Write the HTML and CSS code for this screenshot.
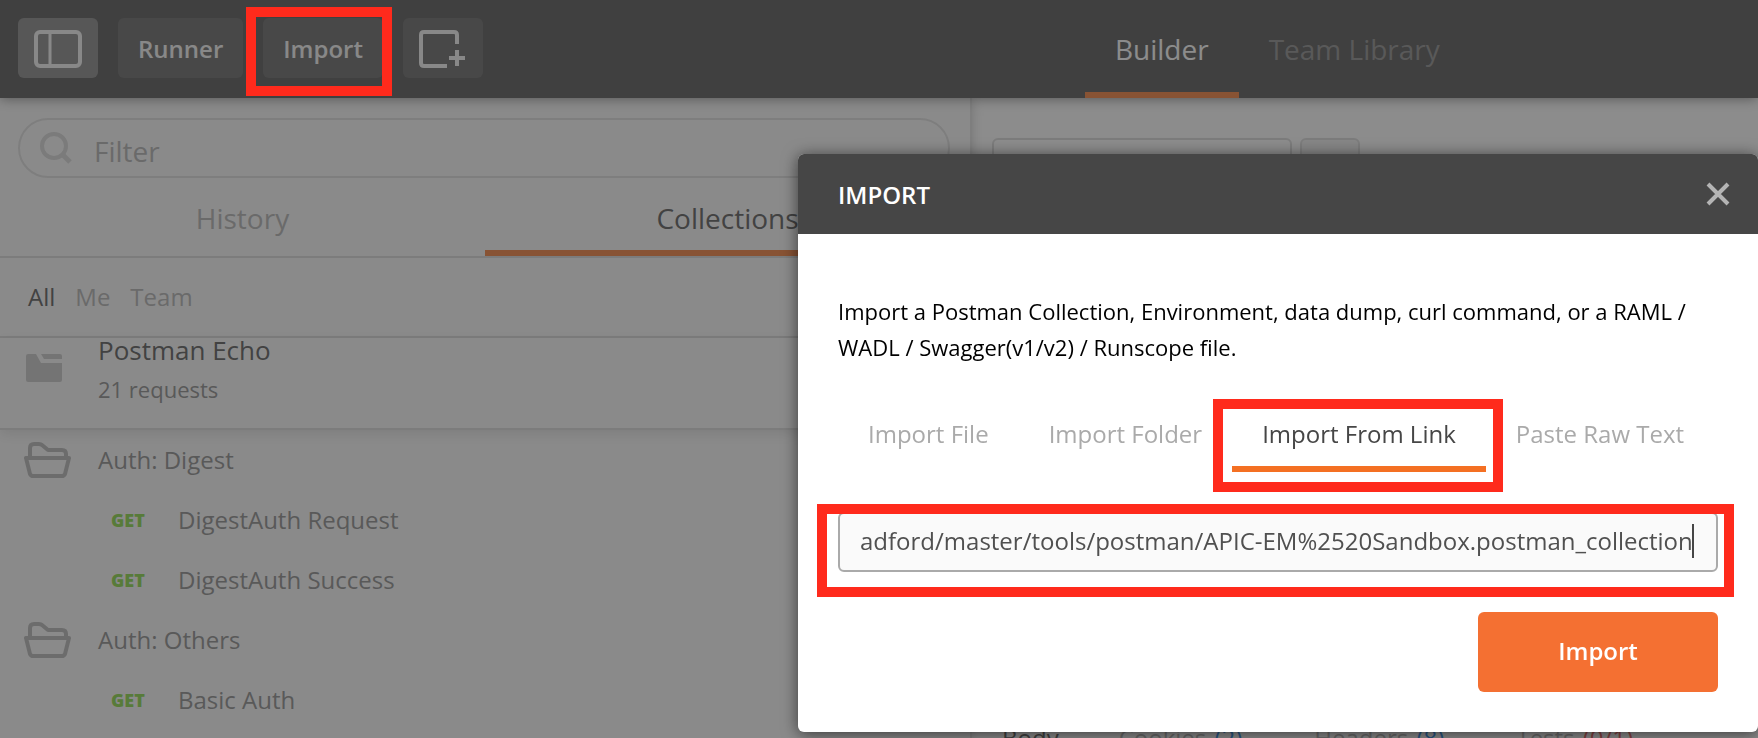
FILE: index.html
```html
<!DOCTYPE html>
<html lang="en">

<head>
  <meta charset="UTF-8">
  <meta name="viewport" content="width=device-width, initial-scale=1.0">
  <title>Postman</title>

  <link rel="stylesheet" href="styles.css">
</head>

<body>
  <div class="app">
    <header class="topbar">
      <button class="tool tool_active" type="button" aria-label="Toggle sidebar">
        <svg width="48" height="38" viewBox="0 0 48 38" fill="none" stroke="currentColor">
          <rect x="2" y="2" width="44" height="34" rx="4" stroke-width="4" />
          <path d="M16 4V34" stroke-width="3" />
        </svg>
      </button>
      <button class="tool" type="button">Runner</button>
      <button class="tool" type="button">Import</button>
      <button class="tool" type="button" aria-label="New window">
        <svg width="48" height="38" viewBox="0 0 48 38" fill="none" stroke="currentColor" stroke-width="4">
          <path d="M28 36H5Q2 36 2 33V5Q2 2 5 2H35Q38 2 38 5V14" />
          <path d="M38 20V36M30 28H46" />
        </svg>
      </button>
      <nav class="views">
        <a class="view view_active" href="#">Builder</a>
        <a class="view" href="#">Team Library</a>
      </nav>
    </header>

    <div class="workspace">
      <aside class="sidebar">
        <label class="filter">
          <svg width="34" height="34" viewBox="0 0 34 34" fill="none" stroke="currentColor">
            <circle cx="14" cy="15" r="12" stroke-width="4" />
            <path d="M22 23L30 31" stroke-width="5" />
          </svg>
          <input type="text" placeholder="Filter" aria-label="Filter">
        </label>
        <nav class="side_tabs">
          <a class="side_tab" href="#">History</a>
          <a class="side_tab side_tab_active" href="#">Collections</a>
        </nav>
        <nav class="scopes">
          <a class="scope scope_active" href="#">All</a>
          <a class="scope" href="#">Me</a>
          <a class="scope" href="#">Team</a>
        </nav>
        <div class="collection">
          <svg width="36" height="28" viewBox="0 0 36 28" fill="currentColor">
            <path d="M0 2Q0 0 2 0H10L15 9H36V26Q36 28 34 28H2Q0 28 0 26Z" />
            <path d="M15 0H34Q36 0 36 2V5H18Z" />
          </svg>
          <div>
            <div class="collection_name">Postman Echo</div>
            <div class="collection_count">21 requests</div>
          </div>
        </div>
        <ul class="tree">
          <li class="folder">
            <svg width="48" height="36" viewBox="0 0 48 36" fill="none" stroke="currentColor" stroke-width="4" stroke-linejoin="round">
              <path d="M6 16V6Q6 2 10 2H15Q17 2 18 3L24 8H38Q42 8 42 12V16" />
              <path d="M2 16H45L41 32Q40 34 38 34H9Q7 34 6 32Z" />
            </svg>
            <span>Auth: Digest</span>
          </li>
          <li class="request"><span class="method">GET</span><span>DigestAuth Request</span></li>
          <li class="request"><span class="method">GET</span><span>DigestAuth Success</span></li>
          <li class="folder">
            <svg width="48" height="36" viewBox="0 0 48 36" fill="none" stroke="currentColor" stroke-width="4" stroke-linejoin="round">
              <path d="M6 16V6Q6 2 10 2H15Q17 2 18 3L24 8H38Q42 8 42 12V16" />
              <path d="M2 16H45L41 32Q40 34 38 34H9Q7 34 6 32Z" />
            </svg>
            <span>Auth: Others</span>
          </li>
          <li class="request"><span class="method">GET</span><span>Basic Auth</span></li>
        </ul>
      </aside>

      <main class="builder">
        <div class="request_tabs">
          <button class="request_tab" type="button" aria-label="Open request"></button>
          <button class="request_add" type="button" aria-label="New request"></button>
        </div>
        <nav class="response_tabs">
          <a class="response_tab response_tab_active" href="#">Body</a>
          <a class="response_tab" href="#">Cookies <span class="count count_blue">(2)</span></a>
          <a class="response_tab" href="#">Headers <span class="count count_blue">(8)</span></a>
          <a class="response_tab" href="#">Tests <span class="count count_red">(0/1)</span></a>
        </nav>
      </main>
    </div>
  </div>

  <div class="overlay"></div>

  <section class="modal" role="dialog" aria-labelledby="modal_title">
    <div class="modal_header">
      <h1 id="modal_title">IMPORT</h1>
      <button class="close" type="button" aria-label="Close">
        <svg width="24" height="24" viewBox="0 0 24 24" fill="none" stroke="currentColor" stroke-width="4">
          <path d="M2 2L22 22M22 2L2 22" />
        </svg>
      </button>
    </div>
    <div class="modal_body">
      <p>Import a Postman Collection, Environment, data dump, curl command, or a RAML / WADL / Swagger(v1/v2) / Runscope file.</p>
      <nav class="import_tabs">
        <a class="import_tab" href="#">Import File</a>
        <a class="import_tab" href="#">Import Folder</a>
        <a class="import_tab import_tab_active" href="#">Import From Link<span class="mark mark_tab"></span></a>
        <a class="import_tab" href="#">Paste Raw Text</a>
      </nav>
      <div class="link_field">
        <input type="text" aria-label="Link" value="adford/master/tools/postman/APIC-EM%2520Sandbox.postman_collection">
        <span class="caret"></span>
        <span class="mark mark_field"></span>
      </div>
      <button class="submit" type="button">Import</button>
    </div>
  </section>

  <span class="mark mark_tool"></span>
</body>

</html>
```

FILE: styles.css
```css
* {
  box-sizing: border-box;
  margin: 0;
  padding: 0;
}

body {
  background-color: #ffffff;
  font-family: "Open Sans", "Noto Sans", sans-serif;
  font-size: 24px;
  height: 100vh;
  overflow: hidden;
}

a {
  color: inherit;
  text-decoration: none;
}

button,
input {
  border: none;
  font: inherit;
}

svg {
  display: block;
  flex: none;
}

.app {
  display: flex;
  flex-direction: column;
  height: 100vh;
}

/* top bar */
.topbar {
  align-items: center;
  background-color: #424242;
  box-shadow: 0 0 12px rgba(0, 0, 0, 0.6);
  display: flex;
  flex: none;
  gap: 20px;
  height: 98px;
  padding: 0 18px 2px;
  position: relative;
  z-index: 1;
}

.tool {
  background-color: #565656;
  border-radius: 6px;
  color: #f4f4f4;
  font-weight: 600;
  height: 60px;
  padding: 0 20px;
}

.tool svg {
  margin: 2px -4px 0;
}

.tool_active {
  background-color: #7c7c7c;
}

.views {
  align-self: stretch;
  display: flex;
  font-size: 28px;
  margin: 0 0 -2px 582px;
}

.view {
  border-bottom: 6px solid transparent;
  color: #808080;
  line-height: 86px;
  padding: 6px 30px 0;
}

.view_active {
  border-color: #f47023;
  color: #ffffff;
}

.workspace {
  display: flex;
  flex: 1;
}

/* sidebar */
.sidebar {
  background-color: #fafafa;
  box-shadow: 0 0 12px rgba(0, 0, 0, 0.3);
  color: #808080;
  flex: 0 0 970px;
  padding-top: 20px;
}

.filter {
  align-items: center;
  border: 2px solid #dcdcdc;
  border-radius: 30px;
  color: #d4d4d4;
  display: flex;
  font-size: 28px;
  gap: 20px;
  height: 60px;
  margin: 0 20px 10px 18px;
  padding: 0 20px;
}

.filter input {
  background: none;
  flex: 1;
  padding-top: 6px;
}

.filter input::placeholder {
  color: #aaaaaa;
}

.side_tabs {
  border-bottom: 2px solid #d8d8d8;
  display: flex;
  font-size: 28px;
}

.side_tab {
  border-bottom: 6px solid transparent;
  color: #aaaaaa;
  flex: 1;
  line-height: 60px;
  padding-bottom: 2px;
  text-align: center;
}

.side_tab_active {
  border-color: #f47023;
  color: #464646;
}

.scopes {
  border-bottom: 2px solid #d8d8d8;
  color: #aaaaaa;
  display: flex;
  gap: 20px;
  line-height: 78px;
  padding: 0 28px;
}

.scope_active {
  color: #464646;
}

.collection {
  align-items: flex-start;
  border-bottom: 2px solid #d8d8d8;
  box-shadow: 0 4px 12px rgba(0, 0, 0, 0.12);
  display: flex;
  gap: 36px;
  padding: 0 26px 24px;
}

.collection svg {
  color: #c4c4c4;
  margin-top: 16px;
}

.collection_name {
  color: #464646;
  font-size: 26px;
  line-height: 24px;
  margin-bottom: 12px;
}

.collection_count {
  font-size: 22px;
  line-height: 30px;
}

.tree {
  line-height: 60px;
  list-style: none;
}

.folder,
.request {
  align-items: center;
  display: flex;
}

.folder {
  gap: 26px;
  padding-left: 24px;
}

.folder svg {
  color: #b0b0b0;
}

.request {
  padding-left: 111px;
}

.method {
  color: #7ad430;
  flex: 0 0 67px;
  font-size: 18px;
  font-weight: 800;
}

/* builder */
.builder {
  border-left: 2px solid #dcdcdc;
  display: flex;
  flex: 1;
  flex-direction: column;
  justify-content: space-between;
  padding: 40px 20px 0;
}

.request_tabs {
  display: flex;
  gap: 8px;
}

.request_tab,
.request_add {
  background-color: #ffffff;
  border: 2px solid #d8d8d8;
  border-radius: 6px;
  height: 60px;
  width: 300px;
}

.request_add {
  background-color: #f0f0f0;
  width: 60px;
}

.response_tabs {
  color: #aaaaaa;
  display: flex;
  gap: 60px;
  height: 12px;
  line-height: 24px;
  padding-left: 10px;
}

.response_tab_active {
  color: #464646;
}

.count {
  margin: 0 12px 0 2px;
}

.count_blue {
  color: #097bed;
}

.count_red {
  color: #ed4b48;
}

.overlay {
  background-color: rgba(63, 63, 63, 0.6);
  inset: 0;
  position: fixed;
  z-index: 2;
}

/* import dialog */
.modal {
  background-color: #ffffff;
  border-radius: 6px;
  box-shadow: 0 2px 16px rgba(0, 0, 0, 0.6);
  position: fixed;
  right: 0;
  top: 154px;
  width: 960px;
  z-index: 3;
}

.modal_header {
  align-items: center;
  background-color: #464646;
  border-radius: 6px 6px 0 0;
  display: flex;
  height: 80px;
  justify-content: space-between;
  padding: 0 28px 0 40px;
}

.modal_header h1 {
  color: #ffffff;
  font-size: 24px;
  font-weight: 600;
}

.close {
  background: none;
  color: #b4b4b4;
}

.modal_body {
  display: flex;
  flex-direction: column;
  padding: 59px 40px 40px;
}

.modal_body p {
  color: #000000;
  font-size: 22px;
  line-height: 36px;
}

.import_tabs {
  color: #aaaaaa;
  display: flex;
  margin-top: 37px;
}

.import_tab {
  border-bottom: 6px solid transparent;
  line-height: 64px;
  padding: 0 30px;
  position: relative;
  white-space: nowrap;
}

.import_tab_active {
  border-color: #f47023;
  color: #464646;
}

.link_field {
  margin-top: 40px;
  position: relative;
}

.link_field input {
  background-color: #fafafa;
  border: 2px solid #aaaaaa;
  border-radius: 6px;
  color: #505050;
  display: block;
  height: 60px;
  padding: 0 20px 4px;
  width: 100%;
}

.caret {
  background-color: #464646;
  height: 34px;
  position: absolute;
  right: 24px;
  top: 12px;
  width: 2px;
}

.submit {
  align-self: flex-end;
  background-color: #f47032;
  border-radius: 6px;
  color: #ffffff;
  font-weight: 600;
  height: 80px;
  margin-top: 40px;
  padding-bottom: 4px;
  width: 240px;
}

/* red call-outs */
.mark {
  border: 10px solid #ff2a1c;
  pointer-events: none;
  position: absolute;
  z-index: 4;
}

.mark_tool {
  height: 89px;
  left: 246px;
  top: 7px;
  width: 146px;
}

.mark_tab {
  inset: -3px -17px -26px -19px;
}

.mark_field {
  inset: -8px -16px -25px -21px;
}
```
